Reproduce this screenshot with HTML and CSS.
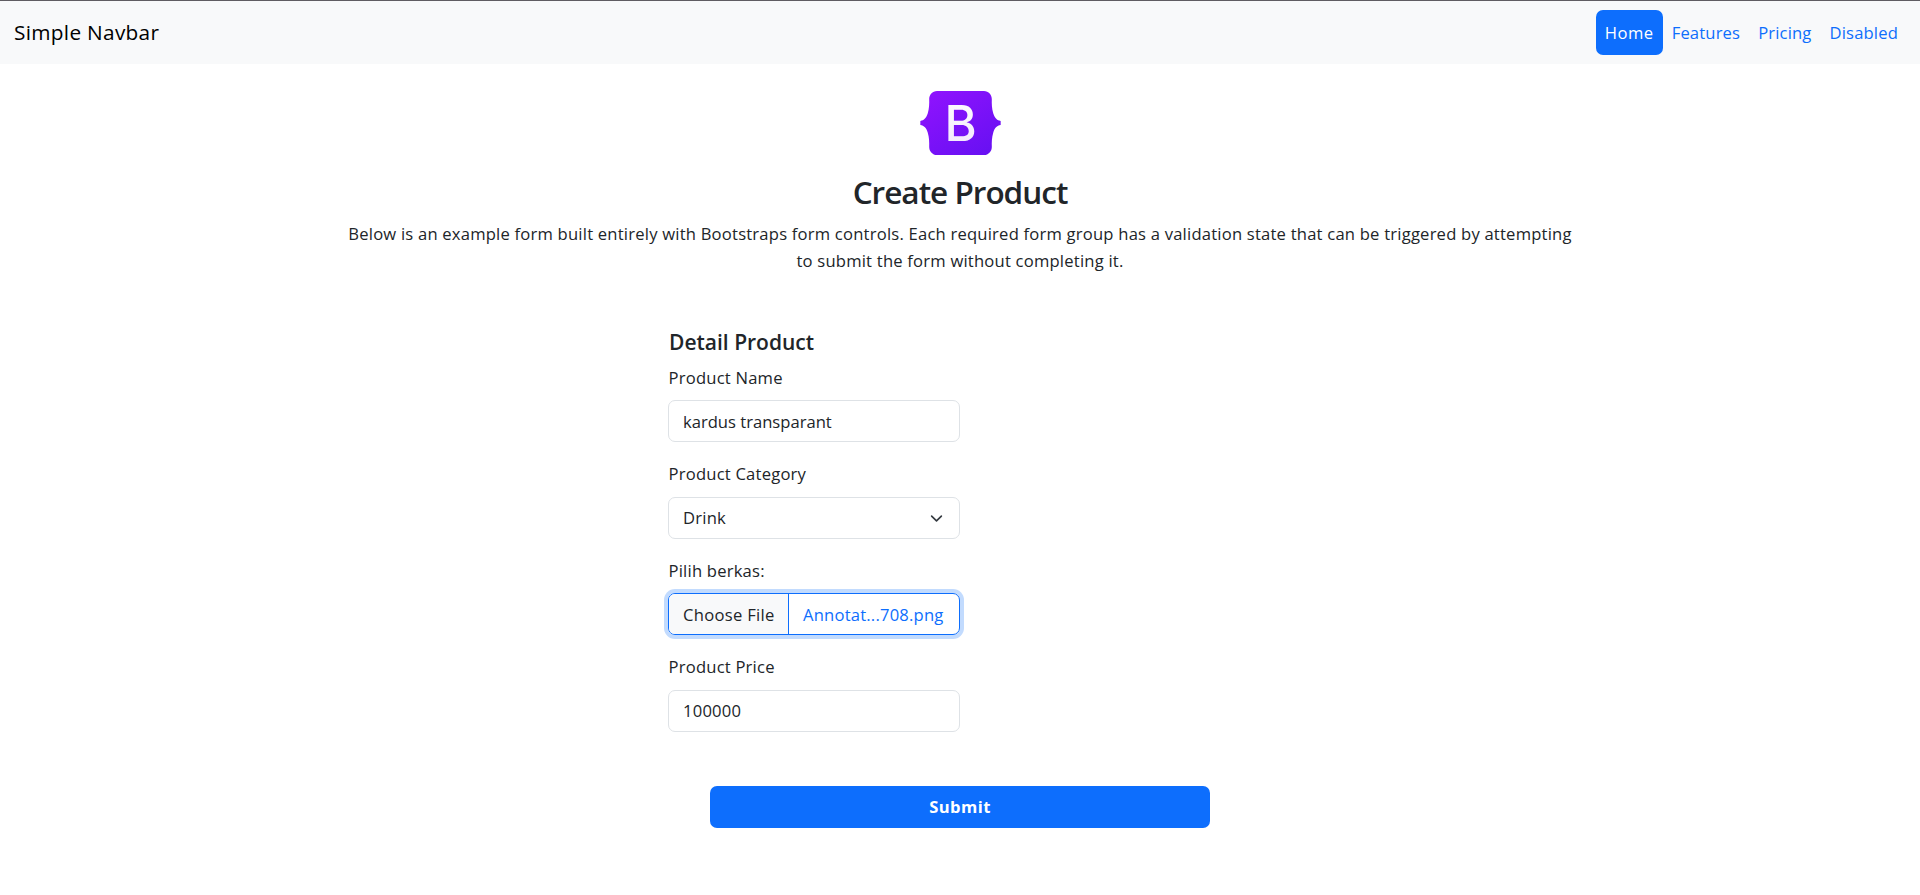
FILE: index.html
```html
<!DOCTYPE html>
<html lang="en">
<head>
<meta charset="utf-8">
<title>Create Product</title>
<link rel="stylesheet" href="styles.css">
</head>
<body>
<nav class="navbar">
  <a class="brand">Simple Navbar</a>
  <div class="nav">
    <a class="nav-link active">Home</a>
    <a class="nav-link">Features</a>
    <a class="nav-link">Pricing</a>
    <a class="nav-link">Disabled</a>
  </div>
</nav>
<main class="container">
  <header class="intro">
    <svg class="logo" viewBox="0 0 118 94" aria-hidden="true">
      <defs>
        <linearGradient id="plate" x1="0.1" y1="0" x2="0.9" y2="1"><stop offset="0" stop-color="#9013fe"/><stop offset="1" stop-color="#6610f2"/></linearGradient>
        <linearGradient id="ink" x1="0" y1="0" x2="0" y2="1"><stop offset="0" stop-color="#fff"/><stop offset="1" stop-color="#f1e5fc"/></linearGradient>
      </defs>
      <path fill="url(#plate)" d="M24.509 0c-6.733 0-11.715 5.893-11.492 12.284.214 6.14-.064 14.092-2.066 20.577C8.943 39.365 5.547 43.485 0 44.014v5.972c5.547.529 8.943 4.649 10.951 11.153 2.002 6.485 2.28 14.437 2.066 20.577C12.794 88.106 17.776 94 24.51 94H93.5c6.733 0 11.714-5.893 11.491-12.284-.214-6.14.064-14.092 2.066-20.577 2.009-6.504 5.396-10.624 10.943-11.153v-5.972c-5.547-.529-8.934-4.649-10.943-11.153-2.002-6.484-2.28-14.437-2.066-20.577C105.214 5.894 100.233 0 93.5 0H24.508z"/>
      <text class="logo-letter" x="59.2" y="73" text-anchor="middle">B</text>
    </svg>
    <h2 class="title">Create Product</h2>
    <p class="lead">Below is an example form built entirely with Bootstraps form controls. Each required form group has a validation state that can be triggered by attempting<br>to submit the form without completing it.</p>
  </header>
  <form class="form">
    <h4 class="subtitle">Detail Product</h4>
    <div class="group">
      <label class="label">Product Name</label>
      <div class="control snug">kardus transparant</div>
    </div>
    <div class="group">
      <label class="label">Product Category</label>
      <div class="control select">Drink<svg class="chevron" viewBox="0 0 16 16"><path fill="none" stroke="#343a40" stroke-linecap="round" stroke-linejoin="round" stroke-width="2" d="m2 5 6 6 6-6"/></svg></div>
    </div>
    <div class="group">
      <label class="label">Pilih berkas:</label>
      <div class="control file"><div class="file-button">Choose File</div><div class="file-name">Annotat...708.png</div></div>
    </div>
    <div class="group">
      <label class="label">Product Price</label>
      <div class="control">100000</div>
    </div>
  </form>
  <button class="submit" type="button">Submit</button>
</main>
</body>
</html>
```
FILE: styles.css
```css
* { box-sizing: border-box; }
body {
  margin: 0;
  background: #fff;
  color: #212529;
  font-family: "Open Sans", "Noto Sans", sans-serif;
  font-size: 16.6px;
  line-height: 26.4px;
  letter-spacing: 0.21px;
}
.navbar {
  display: flex;
  align-items: center;
  justify-content: space-between;
  height: 64px;
  padding: 0 13px;
  border-top: 1px solid #5f5c62;
  background: #f8f9fa;
}
.brand { padding-left: 1px; color: #000; font-size: 20.8px; letter-spacing: 0.3px; }
.nav { display: flex; }
.nav-link { padding: 10px 9px 9px; border-radius: 7px; color: #0d6efd; line-height: 26px; letter-spacing: 0.16px; }
.nav-link.active { background: #0d6efd; color: #fff; letter-spacing: 0.5px; }
.container { display: flex; flex-direction: column; align-items: center; }
.intro { display: flex; flex-direction: column; align-items: center; padding-top: 27px; }
.logo { width: 81px; height: 64px; }
.logo-letter { font-family: Inter, sans-serif; font-weight: 500; font-size: 72px; letter-spacing: 0; fill: url(#ink); }
.title { margin: 16px 0 7px; font-size: 31.5px; line-height: 42px; font-weight: 600; letter-spacing: -1px; }
.lead { margin: 0; text-align: center; line-height: 27px; }
.form { width: 584px; padding-top: 55px; }
.subtitle { margin: 0 0 10px; padding-left: 1px; font-size: 21px; line-height: 26px; font-weight: 600; letter-spacing: 0; }
.group { width: 292px; margin-bottom: 19px; }
.label { display: block; margin-bottom: 9px; padding-left: 0.5px; }
.control { display: flex; align-items: center; height: 42px; padding: 1px 14px 0; border: 1px solid #dee2e6; border-radius: 7px; white-space: nowrap; }
.snug { letter-spacing: 0; }
.select { justify-content: space-between; }
.chevron { width: 17px; height: 13px; }
.file { padding: 0; border-color: #0d6efd; box-shadow: 0 0 0 4px #c2dbfe; align-items: stretch; overflow: hidden; }
.file-button { display: flex; flex: none; align-items: center; width: 120px; padding: 1px 0 0 14px; background: #f8f9fa; border-right: 1px solid #0d6efd; letter-spacing: 0.3px; }
.file-name { display: flex; flex: 1; align-items: center; padding: 1px 0 0 14px; color: #0d6efd; letter-spacing: 0.2px; }
.submit { width: 500px; height: 42px; margin-top: 35px; padding-top: 2px; border: 0; border-radius: 7px; background: #0d6efd; color: #fff; font: inherit; font-weight: 700; letter-spacing: 0.4px; }
```
